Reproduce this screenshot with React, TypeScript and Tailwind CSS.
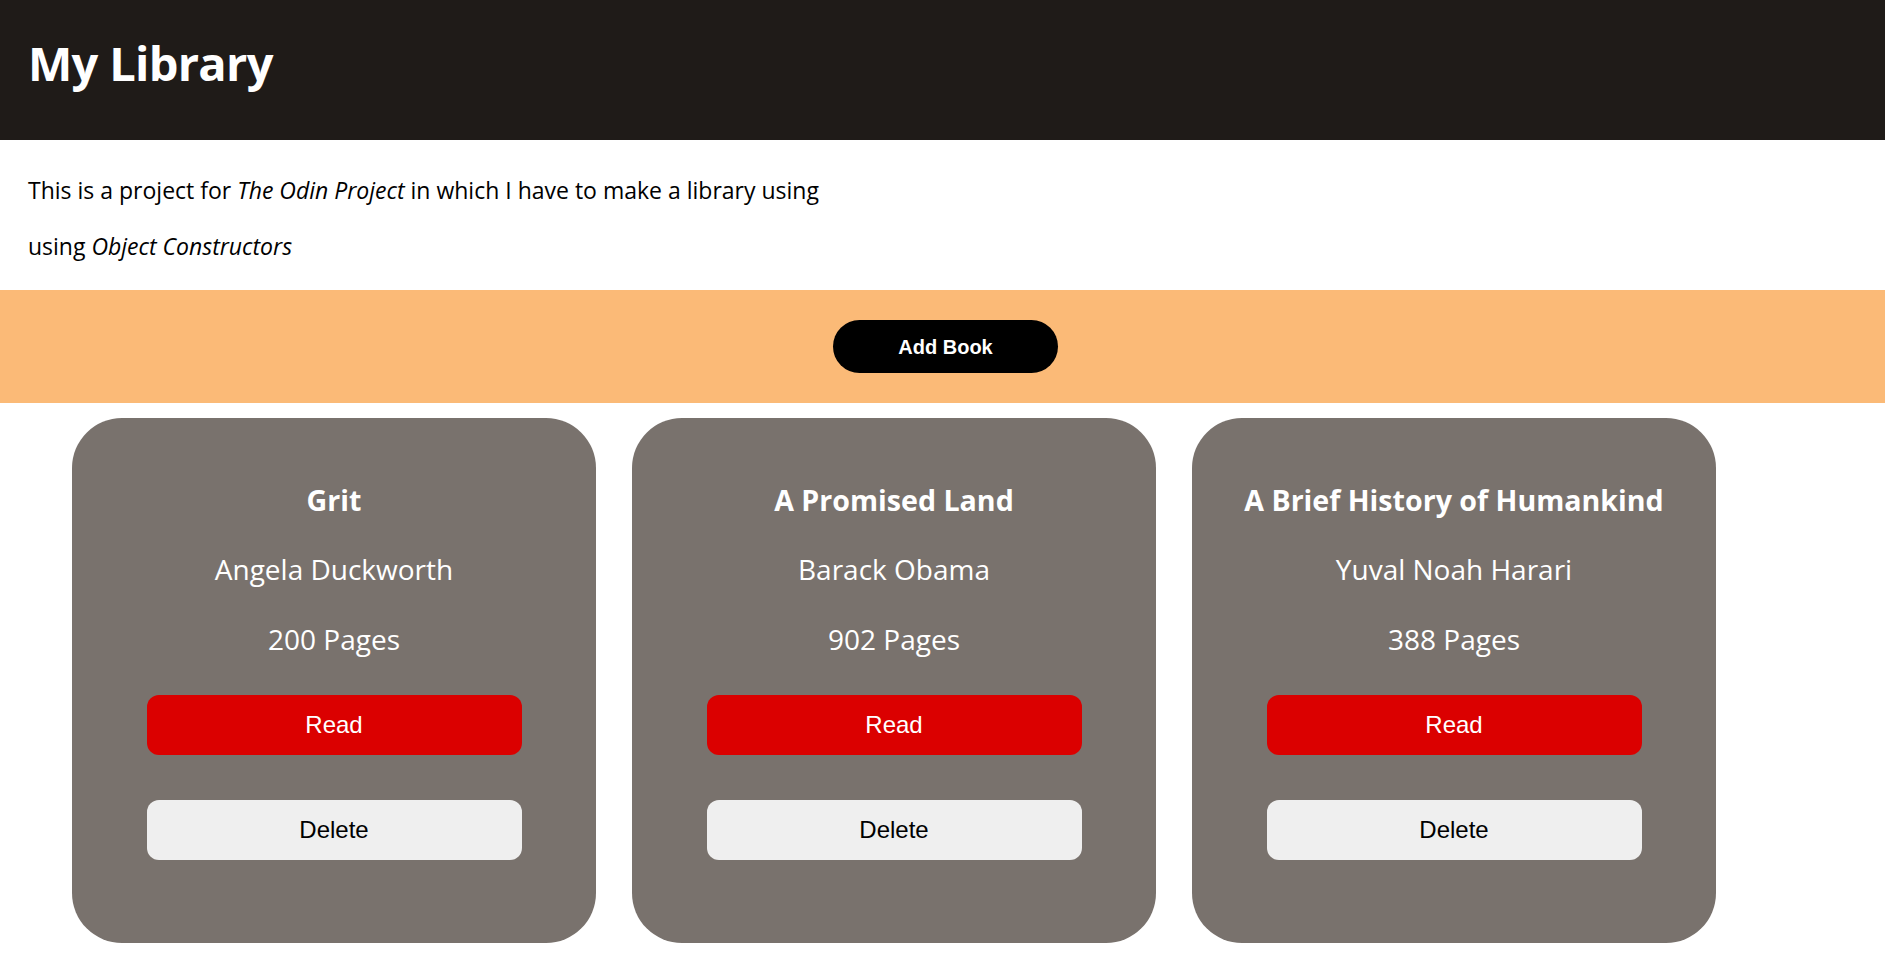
const books = [
  { title: "Grit", author: "Angela Duckworth", pages: 200 },
  { title: "A Promised Land", author: "Barack Obama", pages: 902 },
  { title: "A Brief History of Humankind", author: "Yuval Noah Harari", pages: 388 },
]

function BookCard({ book }: { book: { title: string; author: string; pages: number } }) {
  return (
    <div className="w-[524px] h-[525px] shrink-0 rounded-[50px] bg-[#79726d] flex flex-col items-center pt-[62px] text-white">
      <p className="text-[28.6px] leading-[40px] font-bold">{book.title}</p>
      <p className="mt-[29px] text-[28px] leading-[40px]">{book.author}</p>
      <p className="mt-[30px] text-[28px] leading-[40px]">{book.pages} Pages</p>
      <button className="mt-[36px] w-[375px] h-[60px] rounded-[12px] bg-[#db0000] text-white text-[24px] font-['Liberation_Sans',Arial,sans-serif]">
        Read
      </button>
      <button className="mt-[45px] w-[375px] h-[60px] rounded-[12px] bg-[#efefef] text-black text-[24px] font-['Liberation_Sans',Arial,sans-serif]">
        Delete
      </button>
    </div>
  )
}

export default function App() {
  return (
    <div className="min-h-screen bg-white font-['Open_Sans',sans-serif] pb-[15px]">
      <header className="h-[140px] bg-[#1f1b18] px-[28px] pt-[39px]">
        <h1 className="text-[47px] leading-[48px] font-bold tracking-[-0.015em] text-white">My Library</h1>
      </header>

      <section className="px-[28px] pt-[34px] pb-[28px] flex flex-col gap-[24px] text-[23px] leading-[32px] text-black">
        <p>
          This is a project for <i>The Odin Project</i> in which I have to make a library using
        </p>
        <p>
          using <i>Object Constructors</i>
        </p>
      </section>

      <div className="h-[113px] bg-[#fbba77] flex items-center justify-center pl-[6px]">
        <button className="w-[225px] h-[53px] rounded-full bg-black text-white text-[20px] font-bold font-['Liberation_Sans',Arial,sans-serif]">
          Add Book
        </button>
      </div>

      <div className="mt-[15px] pl-[72px] flex gap-[36px]">
        {books.map((b) => (
          <BookCard key={b.title} book={b} />
        ))}
      </div>
    </div>
  )
}
